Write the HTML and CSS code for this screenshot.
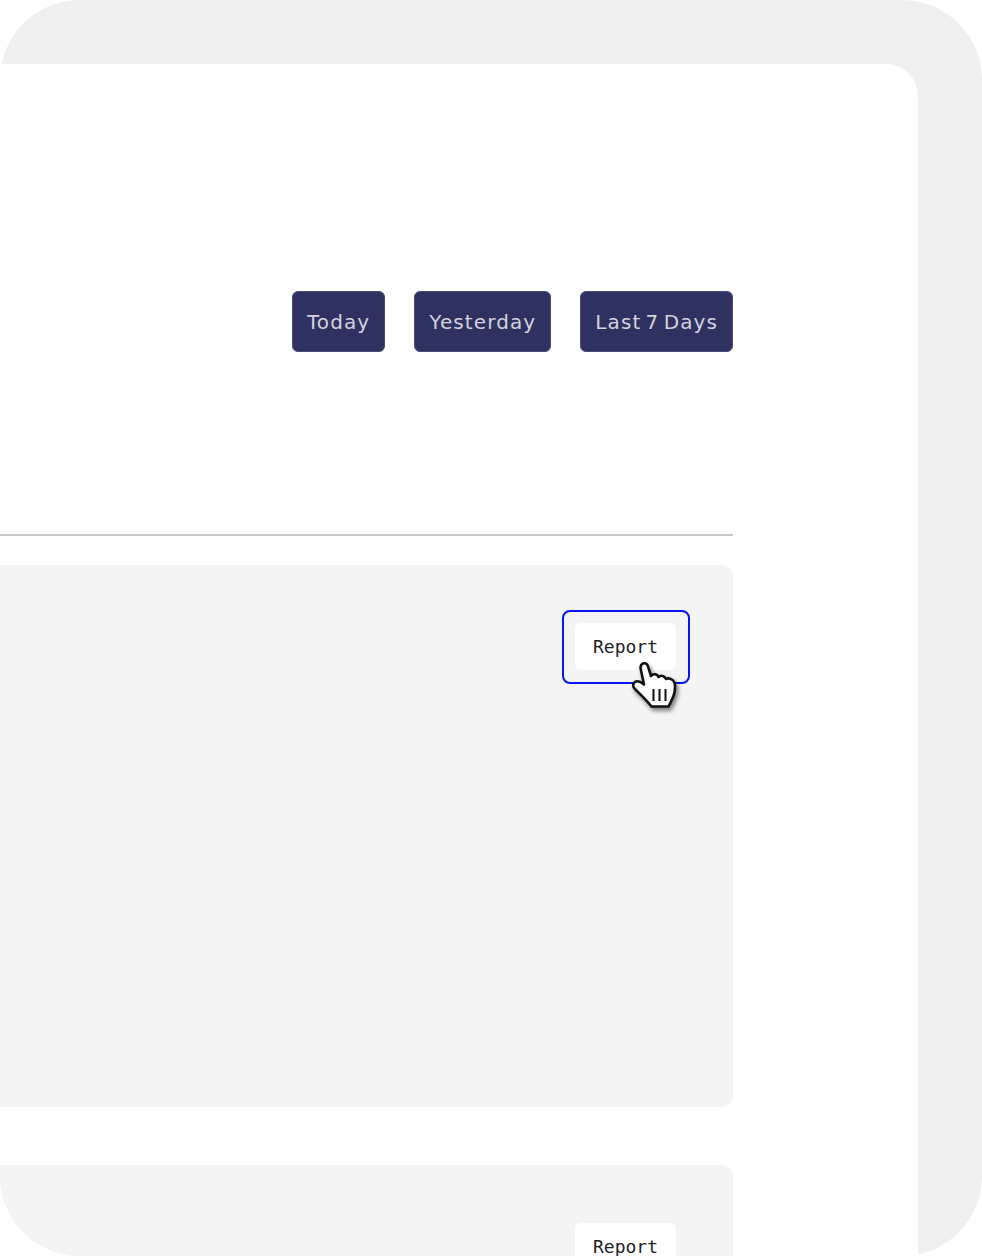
FILE: index.html
```html
<!DOCTYPE html>
<html lang="en">
<head>
<meta charset="utf-8">
<title>Reports</title>
<link rel="stylesheet" href="styles.css">
</head>
<body>
<div class="frame">
  <main class="panel">
    <div class="content">
      <div class="range">
        <button class="range-btn" type="button">Today</button>
        <button class="range-btn" type="button">Yesterday</button>
        <button class="range-btn" type="button">Last 7 Days</button>
      </div>
      <hr class="divider">
      <section class="card card-tall">
        <div class="ring ring-on">
          <button class="report" type="button">Report</button>
          <svg class="cursor" viewBox="0 0 60 60" width="60" height="60" aria-hidden="true">
            <path class="hand" d="M15.500 13C15.500 7.500 21.500 6.500 23 11.500L26 21C28 18.500 32 18.500 33.500 22C35.500 20 39.500 20.500 41 24C43.500 22.500 48 24 49.500 27.500C51 34 48.500 42 45.500 47.500L43.500 51.500H26.500C22 45.500 16 40 10 34C7 31.500 8 27.500 11 26.500C14 25.500 16.500 27.500 19 29.500Z"/>
            <path class="hand-lines" d="M28.500 34V46M34.500 34V46M40.500 34V46"/>
          </svg>
        </div>
      </section>
      <section class="card card-next">
        <div class="ring">
          <button class="report" type="button">Report</button>
        </div>
      </section>
    </div>
  </main>
</div>
</body>
</html>
```

FILE: styles.css
```css
* {
  box-sizing: border-box;
}

html,
body {
  margin: 0;
  height: 100%;
  background: #ffffff;
}

.frame {
  width: 982px;
  height: 1256px;
  padding: 64px 64px 0 0;
  background: #efefef;
  border-radius: 80px;
  overflow: hidden;
}

.panel {
  height: 100%;
  padding-right: 185px;
  background: #ffffff;
  border-radius: 0 32px 0 0;
  overflow: hidden;
}

.content {
  display: flex;
  flex-direction: column;
  padding-top: 227px;
}

.range {
  display: flex;
  justify-content: flex-end;
  gap: 29px;
}

.range-btn {
  height: 61px;
  padding: 0 14px;
  background: #2f3160;
  border: 1px solid #4a4c78;
  border-radius: 6px;
  color: #d2d3de;
  font-family: "DejaVu Sans", sans-serif;
  font-size: 20px;
  letter-spacing: 1.1px;
  word-spacing: -3.2px;
  white-space: nowrap;
}

.divider {
  height: 2px;
  margin: 182px 0 29px;
  background: #c6c6c6;
  border: 0;
}

.card {
  display: flex;
  justify-content: flex-end;
  align-items: flex-start;
  padding: 45px 43px 0 0;
  background: #f4f4f4;
  border-radius: 0 12px 12px 0;
}

.card-tall {
  height: 542px;
}

.card-next {
  height: 300px;
  margin-top: 58px;
}

.ring {
  position: relative;
  padding: 11px 12px 12px 11px;
  border: 2px solid transparent;
  border-radius: 8px;
}

.ring-on {
  border-color: #0a14f0;
}

.report {
  display: block;
  width: 101px;
  height: 47px;
  padding: 0;
  background: #ffffff;
  border: 0;
  border-radius: 6px;
  color: #222222;
  font-family: "DejaVu Sans Mono", monospace;
  font-size: 18px;
}

.cursor {
  position: absolute;
  left: 61px;
  top: 43px;
  filter: drop-shadow(2px 3px 2px rgba(0, 0, 0, 0.5));
}

.hand {
  fill: #ffffff;
  stroke: #111111;
  stroke-width: 2.6;
  stroke-linejoin: round;
}

.hand-lines {
  fill: none;
  stroke: #111111;
  stroke-width: 2;
}
```
